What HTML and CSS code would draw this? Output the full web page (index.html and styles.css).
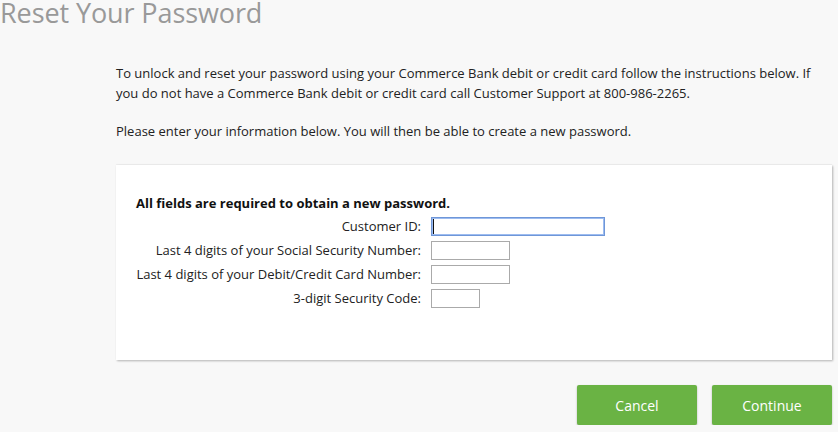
FILE: index.html
```html
<!DOCTYPE html>
<html>
<head>
<meta charset="utf-8">
<link rel="stylesheet" href="styles.css">
</head>
<body>
<h1 class="title">Reset Your Password</h1>
<div class="content">
  <p class="intro">To unlock and reset your password using your Commerce Bank debit or credit card follow the instructions below. If you do not have a Commerce Bank debit or credit card call Customer Support at 800-986-2265.</p>
  <p class="intro">Please enter your information below. You will then be able to create a new password.</p>
  <div class="card">
    <div class="required">All fields are required to obtain a new password.</div>
    <div class="form">
      <label class="label">Customer ID:</label>
      <div class="field"><div class="focus-wrap"><input class="input input-id focused" type="text"><span class="caret"></span></div></div>
      <label class="label">Last 4 digits of your Social Security Number:</label>
      <div class="field"><input class="input input-4" type="text"></div>
      <label class="label">Last 4 digits of your Debit/Credit Card Number:</label>
      <div class="field"><input class="input input-4" type="text"></div>
      <label class="label">3-digit Security Code:</label>
      <div class="field"><input class="input input-3" type="text"></div>
    </div>
  </div>
  <div class="actions">
    <button class="btn">Cancel</button>
    <button class="btn">Continue</button>
  </div>
</div>
</body>
</html>
```
FILE: styles.css
```css
html, body {
  margin: 0;
  padding: 0;
  background: #f8f8f8;
  font-family: "Open Sans", "Liberation Sans", sans-serif;
  color: #222;
}
.title {
  margin: 0;
  font-weight: 400;
  font-size: 27px;
  line-height: 26px;
  color: #999;
  height: 63px;
  letter-spacing: -0.1px;
}
.content {
  margin-left: 116px;
  width: 716px;
}
.intro {
  margin: 0 0 18px 0;
  font-size: 13px;
  line-height: 20px;
  color: #222;
}
.card {
  margin-top: 24px;
  background: #fff;
  height: 195px;
  box-sizing: border-box;
  padding: 28px 20px 0 20px;
  box-shadow: 1px 1px 2px rgba(0,0,0,0.28), 0 -1px 1px rgba(0,0,0,0.04);
}
.required {
  font-weight: 700;
  font-size: 13px;
  line-height: 20px;
  color: #111;
}
.form {
  display: grid;
  grid-template-columns: 285px auto;
  column-gap: 10px;
  row-gap: 5px;
  margin-top: 4px;
}
.label {
  text-align: right;
  font-size: 13px;
  line-height: 19px;
  color: #222;
}
.field {
  display: flex;
  align-items: center;
}
.focus-wrap {
  position: relative;
  display: flex;
}
.input {
  box-sizing: border-box;
  height: 19px;
  border: 1px solid #aaa;
  background: #fff;
  padding: 0 2px;
  margin: 0;
  outline: none;
  font-family: inherit;
  font-size: 13px;
}
.input-id { width: 174px; }
.input-4 { width: 79px; }
.input-3 { width: 49px; }
.focused {
  border: 1px solid #6f97d8;
  box-shadow: inset 0 0 0 1px #9dbcf0;
}
.caret {
  position: absolute;
  left: 2px;
  top: 2px;
  width: 1px;
  height: 15px;
  background: #111;
}
.actions {
  display: flex;
  justify-content: flex-end;
  gap: 15px;
  margin-top: 25px;
}
.btn {
  width: 120px;
  height: 40px;
  background: #6ab344;
  color: #fff;
  border: none;
  border-radius: 2px;
  font-family: "Open Sans", "Liberation Sans", sans-serif;
  font-size: 14px;
  box-shadow: 0 1px 2px rgba(0,0,0,0.3);
  cursor: pointer;
}
```
